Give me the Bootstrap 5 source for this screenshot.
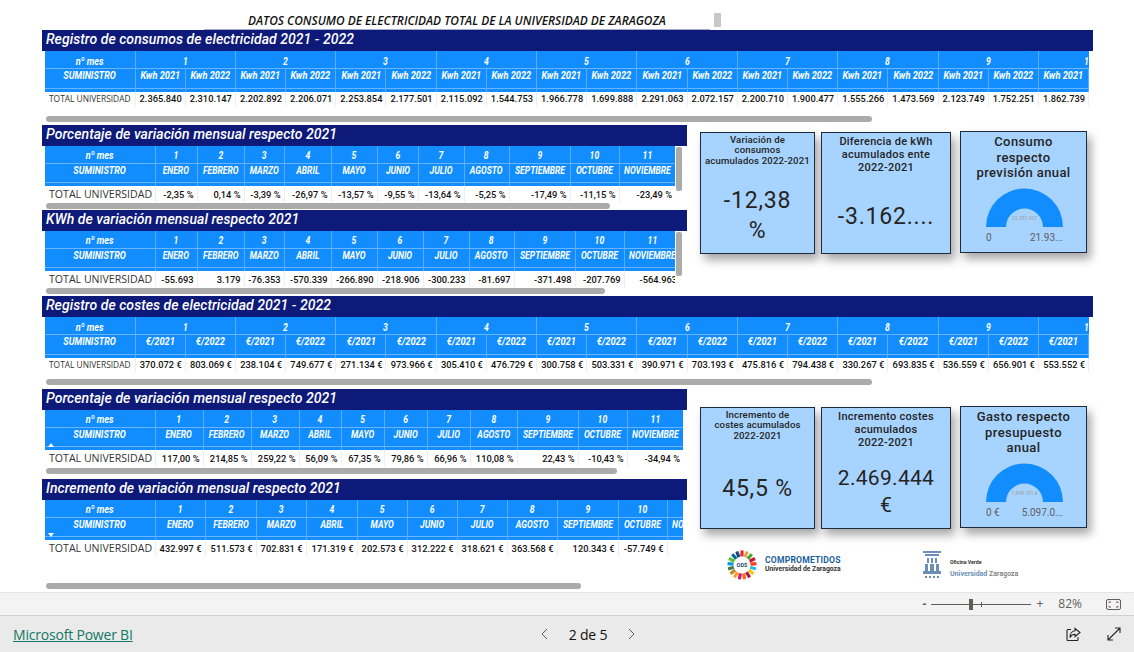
<!DOCTYPE html>
<html lang="es">
<head>
    <meta charset="UTF-8">
    <title>Datos consumo de electricidad</title>
    <meta name="viewport" content="width=device-width, initial-scale=1">
    <link href="https://cdn.jsdelivr.net/npm/bootstrap@5.3.0/dist/css/bootstrap.min.css" rel="stylesheet">
    <style>
        body { width: 1134px; height: 652px; overflow: hidden; background: #fff; font-family: Roboto, "Liberation Sans", sans-serif; color: #252423; }
        .informe { height: 593px; padding-left: 42px; border-bottom: 1px solid #e4e4e4; overflow: hidden; }
        .cabecera { height: 30px; }
        .titulo-informe { margin-left: 162px; width: 506px; height: 30px; padding: 13px 0 0 44px; border-bottom: 1px solid #a9adc9; font: italic 600 11.9px/14px "Open Sans", sans-serif; color: #111; white-space: nowrap; }
        .marca-gris { width: 7px; height: 14px; margin: 13px 0 0 4px; background: #c8c8c8; }
        .barra-seccion { height: 21px; padding-left: 4px; background: #0e1a7a; color: #fff; font: italic 500 14px/18px Roboto, sans-serif; letter-spacing: .05px; white-space: nowrap; }
        .ancho-total { width: 1051px; }
        .ancho-medio { width: 645px; }
        .alto-a { height: 95px; }
        .alto-b { height: 85px; }
        .alto-c { height: 86px; }
        .alto-d { height: 93px; }
        .alto-e { height: 90px; }
        .marco-tabla { margin-left: 3px; overflow: hidden; position: relative; }
        .marco-ancho { width: 1044px; }
        .tabla-bi { table-layout: fixed; width: 1px; }
        .tabla-bi th { background: #118dff; color: #fff; font: italic 700 11px/12px Roboto, sans-serif; text-align: center; vertical-align: top; padding: 0; white-space: nowrap; border-left: 1px solid #5cacff; position: relative; }
        .tabla-bi th:first-child { border-left: 0; }
        .apretado { display: block; width: 160%; margin-left: -30%; transform: scaleX(.78); }
        .tabla-bi th:first-child .apretado { transform: scaleX(.82); }
        .tabla-ancha .fila-col th:not(:first-child) .apretado { transform: scaleX(.84); }
        .tabla-bi .fila-mes th { height: 17px; padding-top: 5px; border-bottom: 1px solid #6ab4ff; }
        .tabla-media .fila-mes th { padding-top: 4px; }
        .tabla-bi .fila-col th { height: 23px; padding-top: 1px; box-shadow: inset 0 -3px 0 #118dff, inset 0 -4px 0 #6ab4ff; }
        .tabla-bi td { height: 14px; padding: 0 3px 0 0; vertical-align: top; font: 500 9.3px/13px Roboto, sans-serif; color: #111; text-align: right; white-space: nowrap; overflow: hidden; border-left: 1px solid #eee; }
        .tabla-bi td:first-child { border-left: 0; padding: 0 0 0 4px; text-align: left; font: 400 8.4px/13px "Open Sans", sans-serif; color: #333; }
        .tabla-media td { height: 16px; padding-top: 2px; }
        .tabla-media td:first-child { font-size: 10.6px; padding-top: 2px; }
        .flecha-orden { position: absolute; left: 3px; bottom: 3px; width: 0; height: 0; border-left: 3px solid transparent; border-right: 3px solid transparent; }
        .flecha-sube { border-bottom: 4px solid #fff; }
        .flecha-baja { border-top: 4px solid #fff; }
        .barra-h { height: 6px; margin-left: 4px; background: #ababab; border-radius: 3px; }
        .barra-v { position: absolute; left: 634px; top: 1px; width: 6px; background: #ababab; border-radius: 2px; }
        .grupo-fichas { margin-left: 13px; }
        .pad-sup-a { padding-top: 7px; }
        .pad-sup-b { padding-top: 18px; }
        .ficha { height: 122px; background: #a6d3ff; border: 1px solid #1d2b3c; box-shadow: 4px 6px 9px rgba(0,0,0,.35); color: #252423; line-height: 1; }
        .ficha-a { width: 115px; margin-right: 6px; }
        .ficha-b { width: 130px; margin-right: 9px; }
        .ficha-c { width: 127px; margin-top: -1px; }
        .tit-a { font-size: 9.6px; line-height: 10.4px; padding-top: 2px; font-weight: 500; letter-spacing: .15px; }
        .tit-b { font-size: 11px; line-height: 13px; padding-top: 2px; font-weight: 500; letter-spacing: .25px; }
        .tit-c { font-size: 13px; line-height: 15.500px; padding-top: 2px; font-weight: 500; letter-spacing: .4px; }
        .valor-ficha { font-size: 23px; line-height: 30px; letter-spacing: .8px; font-weight: 400; }
        .valor-estrecho { font-size: 21px; line-height: 27px; letter-spacing: .3px; }
        .abajo-a { margin-bottom: 9px; }
        .abajo-b { margin-bottom: 21px; }
        .abajo-c { margin-bottom: 24px; }
        .sep-logos { margin-top: 21px; }
        .logo-ods { margin-left: 27px; width: 195px; }
        .logo-txt-a { font: 700 8.600px/9px Roboto, sans-serif; color: #1c5fa0; letter-spacing: .2px; }
        .logo-txt-b { font: 700 6.800px/9px Roboto, sans-serif; color: #333; }
        .logo-txt-c { font: 700 5.200px/6px Roboto, sans-serif; color: #333; }
        .logo-txt-d { font: 500 7px/10px Roboto, sans-serif; color: #777; }
        .logo-txt-d b { color: #6d8fb5; font-weight: 700; }
        .barra-zoom { height: 23px; background: #f3f3f3; border-bottom: 1px solid #cfcfcf; color: #605e5c; }
        .pista { width: 100px; height: 1px; background: #605e5c; margin: 0 5px; position: relative; }
        .pulgar { position: absolute; left: 38px; top: -5px; width: 4px; height: 11px; background: #605e5c; }
        .muesca { position: absolute; left: 50px; top: -2px; width: 1px; height: 5px; background: #605e5c; }
        .txt-zoom { font: 400 12px/1 "Open Sans", sans-serif; }
        .hueco-zoom { margin-left: 15px; }
        .icono-ajuste { margin: 0 13px 0 24px; }
        .pie { height: 36px; background: #eaeaea; padding: 0 13px; font-family: "Open Sans", sans-serif; }
        .enlace-pbi { color: #117865; font-size: 14px; width: 460px; letter-spacing: -.2px; }
        .paginas { width: 96px; margin-left: 67px; font-size: 14px; letter-spacing: -.2px; color: #111; }
        .iconos-pie { margin-left: auto; gap: 22px; }
    </style>
</head>
<body>
<div class="informe">
    <div class="cabecera d-flex">
        <div class="titulo-informe">DATOS CONSUMO DE ELECTRICIDAD TOTAL DE LA UNIVERSIDAD DE ZARAGOZA</div>
        <div class="marca-gris"></div>
    </div>

    <!-- CONSUMOS -->
    <div class="ancho-total alto-a">
        <div class="barra-seccion">Registro de consumos de electricidad 2021 - 2022</div>
        <div id="t-consumos"></div>
    </div>

    <div class="d-flex">
        <div class="ancho-medio">
            <div class="alto-b">
                <div class="barra-seccion">Porcentaje de variación mensual respecto 2021</div>
                <div id="t-porc-consumo"></div>
            </div>
            <div class="alto-c">
                <div class="barra-seccion">KWh de variación mensual respecto 2021</div>
                <div id="t-kwh"></div>
            </div>
        </div>
        <div class="grupo-fichas d-flex pad-sup-a align-items-start">
            <div class="ficha ficha-a d-flex flex-column text-center">
                <div class="tit-a">Variación de<br>consumos<br>acumulados 2022-2021</div>
                <div class="valor-ficha pt-3 mt-1">-12,38<br>%</div>
            </div>
            <div class="ficha ficha-b d-flex flex-column text-center">
                <div class="tit-b">Diferencia de kWh<br>acumulados ente<br>2022-2021</div>
                <div class="valor-ficha mt-auto abajo-b">-3.162....</div>
            </div>
            <div class="ficha ficha-c d-flex flex-column text-center">
                <div class="tit-c">Consumo<br>respecto<br>previsión anual</div>
                <div class="mt-auto" data-gauge="22.387.427|0|21.93..."></div>
            </div>
        </div>
    </div>

    <!-- COSTES -->
    <div class="ancho-total alto-d">
        <div class="barra-seccion">Registro de costes de electricidad 2021 - 2022</div>
        <div id="t-costes"></div>
    </div>

    <div class="d-flex">
        <div class="ancho-medio">
            <div class="alto-e">
                <div class="barra-seccion">Porcentaje de variación mensual respecto 2021</div>
                <div id="t-porc-coste"></div>
            </div>
            <div>
                <div class="barra-seccion">Incremento de variación mensual respecto 2021</div>
                <div id="t-incremento"></div>
            </div>
        </div>
        <div class="grupo-fichas pad-sup-b">
            <div class="d-flex align-items-start">
                <div class="ficha ficha-a d-flex flex-column text-center">
                    <div class="tit-a">Incremento de<br>costes acumulados<br>2022-2021</div>
                    <div class="valor-ficha mt-auto abajo-c">45,5 %</div>
                </div>
                <div class="ficha ficha-b d-flex flex-column text-center">
                    <div class="tit-b">Incremento costes<br>acumulados<br>2022-2021</div>
                    <div class="valor-ficha valor-estrecho mt-auto abajo-a">2.469.444<br>€</div>
                </div>
                <div class="ficha ficha-c d-flex flex-column text-center">
                    <div class="tit-c">Gasto respecto<br>presupuesto<br>anual</div>
                    <div class="mt-auto" data-gauge="7.898.181 €|0 €|5.097.0..."></div>
                </div>
            </div>
            <div class="d-flex align-items-center sep-logos">
                <div class="logo-ods d-flex align-items-center gap-2">
                    <svg id="rueda-ods" width="30" height="30" viewBox="0 0 30 30"></svg>
                    <div>
                        <div class="logo-txt-a">COMPROMETIDOS</div>
                        <div class="logo-txt-b">Universidad de Zaragoza</div>
                    </div>
                </div>
                <div class="d-flex align-items-end gap-2">
                    <svg width="20" height="28" viewBox="0 0 20 28" fill="#6d8fb5">
                        <rect x="1" y="0" width="18" height="2"/><rect x="3" y="3" width="14" height="2"/>
                        <rect x="5" y="7" width="2" height="5"/><rect x="9" y="7" width="2" height="5"/><rect x="13" y="7" width="2" height="5"/>
                        <rect x="3" y="13" width="3" height="7"/><rect x="8" y="13" width="4" height="7"/><rect x="14" y="13" width="3" height="7"/>
                        <rect x="1" y="20" width="18" height="3"/>
                        <rect x="3" y="25" width="2" height="2"/><rect x="7" y="25" width="2" height="2"/><rect x="11" y="25" width="2" height="2"/><rect x="15" y="25" width="2" height="2"/>
                    </svg>
                    <div>
                        <div class="logo-txt-c mb-1">Oficina Verde</div>
                        <div class="logo-txt-d"><b>Universidad</b> Zaragoza</div>
                    </div>
                </div>
            </div>
        </div>
    </div>
</div>

<div class="barra-zoom d-flex align-items-center justify-content-end">
    <span class="txt-zoom fw-bold">-</span>
    <div class="pista"><div class="pulgar"></div><div class="muesca"></div></div>
    <span class="txt-zoom">+</span>
    <span class="txt-zoom hueco-zoom">82%</span>
    <svg class="icono-ajuste" width="15" height="11" viewBox="0 0 15 11" fill="none" stroke="#605e5c">
        <rect x=".5" y=".5" width="14" height="10" rx="1.500"/>
        <path d="M3 4V3h2M10 3h2v1M12 7v1h-2M5 8H3V7"/>
    </svg>
</div>

<div class="pie d-flex align-items-center">
    <a class="enlace-pbi" href="#">Microsoft Power BI</a>
    <div class="paginas d-flex justify-content-between align-items-center">
        <svg width="9" height="12" viewBox="0 0 9 12" fill="none" stroke="#605e5c"><path d="M7 1 2 6l5 5"/></svg>
        <span>2 de 5</span>
        <svg width="9" height="12" viewBox="0 0 9 12" fill="none" stroke="#605e5c"><path d="m2 1 5 5-5 5"/></svg>
    </div>
    <div class="iconos-pie d-flex justify-content-end align-items-center">
        <svg width="15" height="15" viewBox="0 0 15 15" fill="none" stroke="#252423" stroke-width="1.100">
            <path d="M5 2.500H2A1 1 0 0 0 1 3.500v9a1 1 0 0 0 1 1h9a1 1 0 0 0 1-1V10"/>
            <path d="M9 1.500 14 5.500 9 9.500V7.300C6.500 7.300 5 8.500 4 10.500 4 7 6 4 9 3.800Z"/>
        </svg>
        <svg class="ms-1" width="14" height="14" viewBox="0 0 14 14" fill="none" stroke="#252423" stroke-width="1.100">
            <path d="M13 1 1 13M8 1h5v5M1 8v5h5"/>
        </svg>
    </div>
</div>

<script>
    const nombresMes = ["ENERO", "FEBRERO", "MARZO", "ABRIL", "MAYO", "JUNIO", "JULIO", "AGOSTO", "SEPTIEMBRE", "OCTUBRE", "NOVIEMBRE"];
    const ap = t => `<span class="apretado">${t}</span>`;

    // Tablas anchas: dos columnas por mes
    function tablaAncha(id, etiquetas, valores, barra) {
        let cols = `<col style="width:90px">`;
        let mes = "", sub = "", datos = "";
        for (let m = 1; m <= 10; m++) {
            mes += `<th colspan="2">${ap(m)}</th>`;
            sub += `<th>${ap(etiquetas[0])}</th><th>${ap(etiquetas[1])}</th>`;
        }
        valores.concat([""]).forEach(v => { datos += `<td>${v}</td>`; });
        for (let i = 0; i < 20; i++) cols += `<col style="width:50.2px">`;
        document.getElementById(id).innerHTML = `
            <div class="marco-tabla marco-ancho">
                <table class="tabla-bi tabla-ancha"><colgroup>${cols}</colgroup>
                    <thead><tr class="fila-mes"><th>${ap("nº mes")}</th>${mes}</tr>
                    <tr class="fila-col"><th>${ap("SUMINISTRO")}</th>${sub}</tr></thead>
                    <tbody><tr><td>TOTAL UNIVERSIDAD</td>${datos}</tr></tbody>
                </table>
            </div>
            <div class="barra-h" style="width:${barra.ancho}px;margin-top:${barra.margen}px"></div>`;
    }

    // Tablas por mes: anchos leidos de cada visual
    function tablaMes(id, anchos, valores, barra, vertical, flecha) {
        let cols = `<col style="width:110px">`, mes = "", sub = "", datos = "";
        anchos.forEach((w, i) => {
            cols += `<col style="width:${w}px">`;
            mes += `<th>${ap(i + 1)}</th>`;
            sub += `<th>${ap(nombresMes[i])}</th>`;
            datos += `<td>${valores[i]}</td>`;
        });
        const orden = flecha ? `<span class="flecha-orden flecha-${flecha}"></span>` : "";
        const barraV = vertical ? `<div class="barra-v" style="height:${vertical}px"></div>` : "";
        document.getElementById(id).innerHTML = `
            <div class="position-relative">
                <div class="marco-tabla" style="width:${barra.marco}px">
                    <table class="tabla-bi tabla-media"><colgroup>${cols}</colgroup>
                        <thead><tr class="fila-mes"><th>${ap("nº mes")}</th>${mes}</tr>
                        <tr class="fila-col"><th>${ap("SUMINISTRO")}${orden}</th>${sub}</tr></thead>
                        <tbody><tr><td>TOTAL UNIVERSIDAD</td>${datos}</tr></tbody>
                    </table>
                </div>
                ${barraV}
            </div>
            <div class="barra-h" style="width:${barra.ancho}px;margin-top:${barra.margen}px"></div>`;
    }

    tablaAncha("t-consumos", ["Kwh 2021", "Kwh 2022"],
        ["2.365.840", "2.310.147", "2.202.892", "2.206.071", "2.253.854", "2.177.501", "2.115.092", "1.544.753", "1.966.778", "1.699.888", "2.291.063", "2.072.157", "2.200.710", "1.900.477", "1.555.266", "1.473.569", "2.123.749", "1.752.251", "1.862.739"],
        { ancho: 826, margen: 10 });
    tablaAncha("t-costes", ["€/2021", "€/2022"],
        ["370.072 €", "803.069 €", "238.104 €", "749.677 €", "271.134 €", "973.966 €", "305.410 €", "476.729 €", "300.758 €", "503.331 €", "390.971 €", "703.193 €", "475.816 €", "794.438 €", "330.267 €", "693.835 €", "536.559 €", "656.901 €", "553.552 €"],
        { ancho: 826, margen: 7 });

    tablaMes("t-porc-consumo", [42, 47, 40, 47, 46, 41, 46, 45, 61, 49, 56],
        ["-2,35 %", "0,14 %", "-3,39 %", "-26,97 %", "-13,57 %", "-9,55 %", "-13,64 %", "-5,25 %", "-17,49 %", "-11,15 %", "-23,49 %"],
        { ancho: 564, margen: 1, marco: 630 }, 44);
    tablaMes("t-kwh", [42, 47, 40, 47, 46, 46, 46, 45, 61, 49, 56],
        ["-55.693", "3.179", "-76.353", "-570.339", "-266.890", "-218.906", "-300.233", "-81.697", "-371.498", "-207.769", "-564.963"],
        { ancho: 559, margen: 1, marco: 630 }, 44);
    tablaMes("t-porc-coste", [48, 48, 48, 42, 43, 43, 43, 47, 61, 49, 56],
        ["117,00 %", "214,85 %", "259,22 %", "56,09 %", "67,35 %", "79,86 %", "66,96 %", "110,08 %", "22,43 %", "-10,43 %", "-34,94 %"],
        { ancho: 571, margen: 2, marco: 638 }, 0, "sube");
    tablaMes("t-incremento", [50, 51, 50, 51, 50, 50, 50, 50, 61, 49, 56],
        ["432.997 €", "511.573 €", "702.831 €", "171.319 €", "202.573 €", "312.222 €", "318.621 €", "363.568 €", "120.343 €", "-57.749 €", "-"],
        { ancho: 535, margen: 27, marco: 638 }, 0, "baja");

    // Medidores
    document.querySelectorAll("[data-gauge]").forEach(el => {
        const [centro, min, max] = el.dataset.gauge.split("|");
        el.innerHTML = `
            <svg width="125" height="70" viewBox="0 0 125 70" class="d-block">
                <path d="M25 45a38.500 38.500 0 0 1 77 0h-20a18.500 18.500 0 0 0-37 0z" fill="#118dff"/>
                <text x="63.500" y="38" font-size="5" fill="#a19f9d" text-anchor="middle" font-family="Roboto">${centro}</text>
                <text x="25" y="59" font-size="10" fill="#605e5c" font-family="Roboto">${min}</text>
                <text x="102" y="59" font-size="10" fill="#605e5c" text-anchor="end" font-family="Roboto">${max}</text>
            </svg>`;
    });

    // Rueda de los ODS
    const coloresOds = ["#e5243b", "#dda63a", "#4c9f38", "#c5192d", "#ff3a21", "#26bde2", "#fcc30b", "#a21942", "#fd6925", "#dd1367", "#fd9d24", "#bf8b2e", "#3f7e44", "#0a97d9", "#56c02b", "#00689d", "#19486a"];
    let rayas = "";
    coloresOds.forEach((c, i) => {
        const a = i * 2 * Math.PI / 17 - Math.PI / 2;
        const x1 = 15 + 8.5 * Math.cos(a), y1 = 15 + 8.5 * Math.sin(a);
        const x2 = 15 + 14.5 * Math.cos(a), y2 = 15 + 14.5 * Math.sin(a);
        rayas += `<line x1="${x1}" y1="${y1}" x2="${x2}" y2="${y2}" stroke="${c}" stroke-width="3.200"/>`;
    });
    document.getElementById("rueda-ods").innerHTML = rayas +
        `<text x="15" y="17" font-size="5.500" font-weight="700" fill="#19486a" text-anchor="middle" font-family="Roboto">ODS</text>`;
</script>
<script src="https://cdn.jsdelivr.net/npm/bootstrap@5.3.0/dist/js/bootstrap.bundle.min.js"></script>
</body>
</html>
